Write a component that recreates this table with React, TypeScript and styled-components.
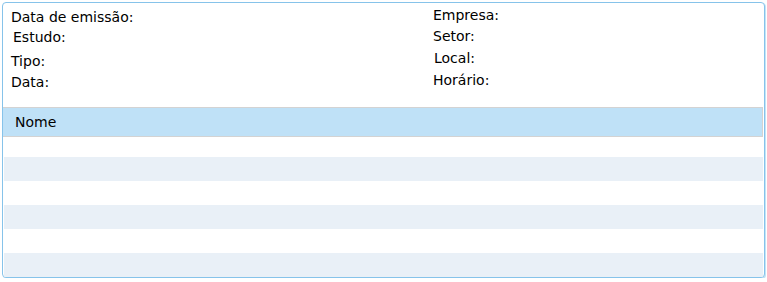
import styled, { createGlobalStyle } from 'styled-components';

const GlobalStyle = createGlobalStyle`
    html, body {
        margin: 0;
        padding: 0;
        background: #ffffff;
    }
    body {
        font-family: "DejaVu Sans", Verdana, sans-serif;
        color: #000000;
    }
`

const StyledPanel = styled.div`
    margin: 2px 0 0 2px;
    width: 761px;
    height: 274px;
    border: 1px solid #86c3ea;
    border-radius: 4px;
    box-shadow: 1px 1px 0 #c4e4f7;
    overflow: hidden;
    display: flex;
    flex-direction: column;
    background-color: white;
`

const StyledInfo = styled.div`
    display: grid;
    grid-template-columns: 422px 1fr;
    height: 104px;
    flex-shrink: 0;
    padding-left: 8px;
    box-sizing: border-box;
`

const StyledColumn = styled.div<{ $top: number }>`
    display: flex;
    flex-direction: column;
    padding-top: ${(p) => p.$top}px;
`

const StyledField = styled.div<{ $mt?: number; $indent?: number }>`
    font-size: 14px;
    line-height: 20px;
    height: 20px;
    white-space: nowrap;
    margin-top: ${(p) => p.$mt ?? 0}px;
    padding-left: ${(p) => p.$indent ?? 0}px;
`

const StyledTable = styled.div`
    display: flex;
    flex-direction: column;
    margin-right: 1px;
`

const StyledHeader = styled.div`
    flex-shrink: 0;
    height: 28px;
    line-height: 28px;
    background-color: #bfe1f7;
    border-top: 1px solid #d3d3d3;
    border-bottom: 1px solid #d3d3d3;
    border-right: 1px solid #d3d3d3;
    padding-left: 12px;
    font-size: 14px;
`

const StyledRow = styled.div<{ $striped: boolean; $height: number }>`
    flex-shrink: 0;
    height: ${(p) => p.$height}px;
    margin-left: 1px;
    background-color: ${(p) => (p.$striped ? '#e9f0f7' : '#ffffff')};
`

const leftFields = [
    { label: 'Data de emissão:', mt: 0, indent: 0 },
    { label: 'Estudo:', mt: 0, indent: 2 },
    { label: 'Tipo:', mt: 4, indent: 0 },
    { label: 'Data:', mt: 1, indent: 0 },
]

const rightFields = [
    { label: 'Empresa:', mt: 0, indent: 0 },
    { label: 'Setor:', mt: 1, indent: 0 },
    { label: 'Local:', mt: 2, indent: 1 },
    { label: 'Horário:', mt: 2, indent: 0 },
]

export default function App() {
    const rows = [0, 1, 2, 3, 4, 5];

    return (
        <>
            <GlobalStyle />
            <StyledPanel>
                <StyledInfo>
                    <StyledColumn $top={4}>
                        {leftFields.map((f) => (
                            <StyledField key={f.label} $mt={f.mt} $indent={f.indent}>
                                {f.label}
                            </StyledField>
                        ))}
                    </StyledColumn>
                    <StyledColumn $top={2}>
                        {rightFields.map((f) => (
                            <StyledField key={f.label} $mt={f.mt} $indent={f.indent}>
                                {f.label}
                            </StyledField>
                        ))}
                    </StyledColumn>
                </StyledInfo>
                <StyledTable>
                    <StyledHeader>Nome</StyledHeader>
                    {rows.map((r) => (
                        <StyledRow key={r} $striped={r % 2 === 1} $height={r === 0 ? 20 : 24} />
                    ))}
                </StyledTable>
            </StyledPanel>
        </>
    )
}
